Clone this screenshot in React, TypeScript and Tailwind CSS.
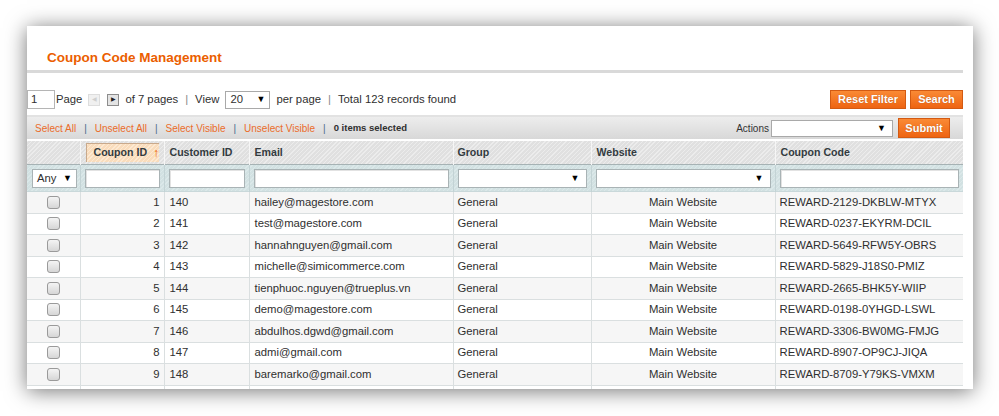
import React from "react";

const rows = [
  { id: 1, cid: 140, email: "hailey@magestore.com", code: "REWARD-2129-DKBLW-MTYX" },
  { id: 2, cid: 141, email: "test@magestore.com", code: "REWARD-0237-EKYRM-DCIL" },
  { id: 3, cid: 142, email: "hannahnguyen@gmail.com", code: "REWARD-5649-RFW5Y-OBRS" },
  { id: 4, cid: 143, email: "michelle@simicommerce.com", code: "REWARD-5829-J18S0-PMIZ" },
  { id: 5, cid: 144, email: "tienphuoc.nguyen@trueplus.vn", code: "REWARD-2665-BHK5Y-WIIP" },
  { id: 6, cid: 145, email: "demo@magestore.com", code: "REWARD-0198-0YHGD-LSWL" },
  { id: 7, cid: 146, email: "abdulhos.dgwd@gmail.com", code: "REWARD-3306-BW0MG-FMJG" },
  { id: 8, cid: 147, email: "admi@gmail.com", code: "REWARD-8907-OP9CJ-JIQA" },
  { id: 9, cid: 148, email: "baremarko@gmail.com", code: "REWARD-8709-Y79KS-VMXM" },
];

const hatch =
  "bg-[repeating-linear-gradient(135deg,#ececec_0px,#ececec_1px,#e0e0e0_1px,#e0e0e0_3px)]";

function OrangeButton({ children, className = "" }: { children: React.ReactNode; className?: string }) {
  return (
    <button
      type="button"
      className={`h-[19px] whitespace-nowrap border border-[#d35a12] bg-[linear-gradient(#fa8a35,#ee6412)] text-[11px] font-bold leading-[17px] text-white [text-shadow:0_0_1px_rgba(0,0,0,0.3)] ${className}`}
    >
      {children}
    </button>
  );
}

function Caret() {
  return <span className="text-[9px] leading-none text-black">▼</span>;
}

function Checkbox() {
  return (
    <span className="mx-auto block h-[13px] w-[13px] rounded-[3px] border border-[#9a9a9a] bg-[linear-gradient(#f4f4f4,#d6d6d6)]" />
  );
}

function FilterInput() {
  return <div className="h-[19px] border border-[#a9b3b5] bg-white shadow-[inset_1px_1px_0_#e2e2e2]" />;
}

function FilterSelect() {
  return (
    <div className="flex h-[19px] items-center justify-end border border-[#a9b3b5] bg-white pr-[6px]">
      <Caret />
    </div>
  );
}

export default function App() {
  return (
    <div className="h-[416px] w-[999px] overflow-hidden whitespace-nowrap bg-white pl-[27px] pt-[26px] font-['Liberation_Sans',Arial,sans-serif] text-[11.3px] text-[#2f2f2f]">
      <div className="h-[363px] w-[946px] overflow-hidden bg-white pr-[10px] shadow-[0_2px_20px_rgba(0,0,0,0.55)]">
        <h1 className="pl-[20px] pt-[24px] text-[13.5px] font-bold leading-[16px] text-[#eb5e00]">
          Coupon Code Management
        </h1>
        <div className="mt-[4px] h-[3px] bg-[#d9d9d9]" />

        {/* pager */}
        <div className="mt-[17px] flex h-[19px] items-center">
          <div className="h-[19px] w-[28px] border border-[#b5b5b5] bg-white pl-[3px] leading-[17px]">1</div>
          <span className="ml-[1px]">Page</span>
          <span className="ml-[6px] flex h-[12px] w-[12px] items-center justify-center border border-[#dddddd] bg-[#f0f0f0] text-[6px] text-[#cfcfcf]">
            ◀
          </span>
          <span className="ml-[7px] flex h-[12px] w-[12px] items-center justify-center border border-[#8d8d8d] bg-[#e4e4e4] text-[6px] text-[#222]">
            ▶
          </span>
          <span className="ml-[6px]">of 7 pages</span>
          <span className="mx-[7px] text-[#888]">|</span>
          <span>View</span>
          <div className="ml-[6px] flex h-[18px] w-[45px] items-center justify-between border border-[#a9a9a9] bg-white px-[4px]">
            <span>20</span>
            <Caret />
          </div>
          <span className="ml-[6px]">per page</span>
          <span className="mx-[7px] text-[#888]">|</span>
          <span>Total 123 records found</span>
          <div className="ml-auto flex gap-[4px]">
            <OrangeButton className="w-[76px]">Reset Filter</OrangeButton>
            <OrangeButton className="w-[53px]">Search</OrangeButton>
          </div>
        </div>

        {/* massaction */}
        <div className="mt-[6px] flex h-[24px] items-center border-t-2 border-[#e2e2e2] bg-[linear-gradient(#ededed,#d8d8d8)] pl-[8px] pr-[13px] text-[10px]">
          <span className="text-[#eb6c2a]">Select All</span>
          <span className="mx-[8px] text-[#4a6a8a]">|</span>
          <span className="text-[#eb6c2a]">Unselect All</span>
          <span className="mx-[8px] text-[#4a6a8a]">|</span>
          <span className="text-[#eb6c2a]">Select Visible</span>
          <span className="mx-[8px] text-[#4a6a8a]">|</span>
          <span className="text-[#eb6c2a]">Unselect Visible</span>
          <span className="mx-[8px] text-[#4a6a8a]">|</span>
          <span className="text-[9.5px] font-bold text-[#2f2f2f]">0 items selected</span>
          <span className="ml-auto text-[#333]">Actions</span>
          <div className="ml-[2px] flex h-[17px] w-[122px] items-center justify-end border border-[#a9a9a9] bg-white pr-[6px]">
            <Caret />
          </div>
          <OrangeButton className="ml-[5px] h-[20px] w-[52px]">Submit</OrangeButton>
        </div>

        {/* grid */}
        <table className="mt-[2px] w-[936px] table-fixed border-collapse">
          <colgroup>
            <col className="w-[53px]" />
            <col className="w-[84px]" />
            <col className="w-[85px]" />
            <col className="w-[204px]" />
            <col className="w-[138px]" />
            <col className="w-[184px]" />
            <col className="w-[188px]" />
          </colgroup>
          <thead>
            <tr className={`h-[22px] border-b border-[#a6b2b4] ${hatch} text-left text-[10.6px] font-bold text-[#333b40]`}>
              <th className="border-r border-[#f6f6f6]" />
              <th className="border-r border-[#f6f6f6] px-[5px] py-[2px]">
                <div className="flex h-[19px] items-center border-l border-t border-[#c8a98c] bg-[repeating-linear-gradient(135deg,#fde9d2_0px,#fde9d2_1px,#f9dcbc_1px,#f9dcbc_3px)] pl-[7px]">
                  Coupon ID
                  <span className="ml-[6px] text-[12px] font-normal text-[#eb5e00]">↑</span>
                </div>
              </th>
              <th className="border-r border-[#f6f6f6] pl-[5px]">Customer ID</th>
              <th className="border-r border-[#f6f6f6] pl-[5px]">Email</th>
              <th className="border-r border-[#f6f6f6] pl-[4px]">Group</th>
              <th className="border-r border-[#f6f6f6] pl-[5px]">Website</th>
              <th className="pl-[5px]">Coupon Code</th>
            </tr>
            <tr className="h-[27px] border-b border-[#c9d8da] bg-[repeating-linear-gradient(135deg,#dbe8e9_0px,#dbe8e9_1px,#d2e1e2_1px,#d2e1e2_3px)]">
              <th className="border-r border-[#c3d3d5] px-[5px]">
                <div className="flex h-[19px] w-[45px] items-center justify-between border border-[#a9b3b5] bg-white px-[4px] font-normal">
                  <span className="text-[11.3px]">Any</span>
                  <Caret />
                </div>
              </th>
              <th className="border-r border-[#c3d3d5] px-[4px]"><FilterInput /></th>
              <th className="border-r border-[#c3d3d5] px-[4px]"><FilterInput /></th>
              <th className="border-r border-[#c3d3d5] px-[4px]"><FilterInput /></th>
              <th className="border-r border-[#c3d3d5] px-[4px]"><FilterSelect /></th>
              <th className="border-r border-[#c3d3d5] px-[4px]"><FilterSelect /></th>
              <th className="px-[4px]"><FilterInput /></th>
            </tr>
          </thead>
          <tbody>
            {rows.map((r, i) => (
              <tr key={r.id} className={`h-[21.5px] border-b border-[#dadfe0] ${i % 2 === 0 ? "bg-[#f6f6f6]" : "bg-white"}`}>
                <td className="border-r border-[#dadfe0]"><Checkbox /></td>
                <td className="border-r border-[#dadfe0] pr-[4px] text-right">{r.id}</td>
                <td className="border-r border-[#dadfe0] pl-[5px]">{r.cid}</td>
                <td className="border-r border-[#dadfe0] pl-[5px]">{r.email}</td>
                <td className="border-r border-[#dadfe0] pl-[4px]">General</td>
                <td className="border-r border-[#dadfe0] text-center">Main Website</td>
                <td className="pl-[4px]">{r.code}</td>
              </tr>
            ))}
            <tr className="h-[21.5px] bg-white">
              <td className="border-r border-[#dadfe0]" />
              <td className="border-r border-[#dadfe0]" />
              <td className="border-r border-[#dadfe0]" />
              <td className="border-r border-[#dadfe0]" />
              <td className="border-r border-[#dadfe0]" />
              <td className="border-r border-[#dadfe0]" />
              <td />
            </tr>
          </tbody>
        </table>
      </div>
    </div>
  );
}
